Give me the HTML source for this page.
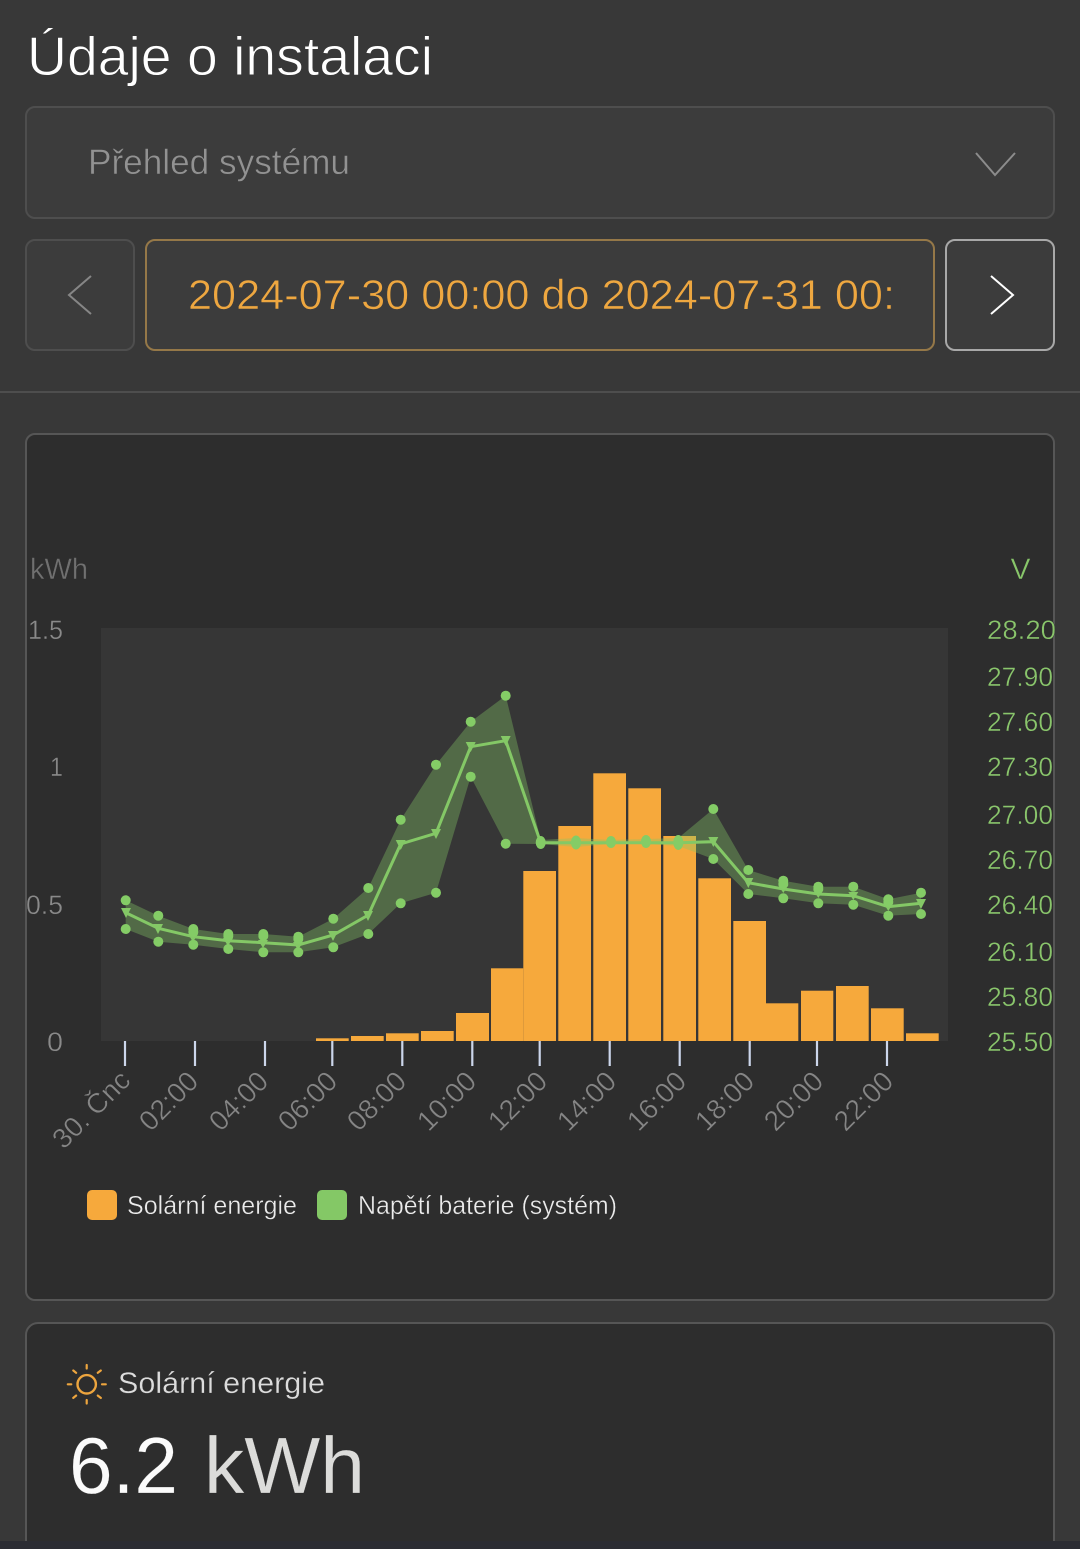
<!DOCTYPE html>
<html lang="cs"><head><meta charset="utf-8"><title>Údaje o instalaci</title>
<style>
html,body{margin:0;padding:0;background:#383838;width:1080px;height:1549px;overflow:hidden}
svg{display:block}
text{font-family:"Liberation Sans",sans-serif}
</style></head><body>
<svg width="1080" height="1549" viewBox="0 0 1080 1549" xmlns="http://www.w3.org/2000/svg">
<rect width="1080" height="1549" fill="#383838"/>
<text x="27" y="75" font-size="55" fill="#fff" textLength="406" lengthAdjust="spacingAndGlyphs" stroke="#383838" stroke-width=".9">Údaje o instalaci</text>
<rect x="26" y="107" width="1028" height="111" rx="9" fill="#3c3c3c" stroke="#4e4e4e" stroke-width="2"/>
<text x="88" y="174" font-size="35" fill="#929292" textLength="262" lengthAdjust="spacingAndGlyphs" stroke="#3c3c3c" stroke-width=".5">Přehled systému</text>
<path d="M976 153 995 175 1015 153" fill="none" stroke="#8c8c8c" stroke-width="2"/>
<rect x="26" y="240" width="108" height="110" rx="9" fill="#3c3c3c" stroke="#4e4e4e" stroke-width="2"/>
<path d="M91 276 69 295 91 314" fill="none" stroke="#868686" stroke-width="2"/>
<rect x="146" y="240" width="788" height="110" rx="9" fill="#3c3c3c" stroke="#957848" stroke-width="2"/>
<text x="188" y="309" font-size="42" fill="#eea740" textLength="707" lengthAdjust="spacingAndGlyphs" stroke="#3c3c3c" stroke-width=".6">2024-07-30 00:00 do 2024-07-31 00:</text>
<rect x="946" y="240" width="108" height="110" rx="9" fill="#3c3c3c" stroke="#a8a8a8" stroke-width="2"/>
<path d="M991 276 1013 295 991 314" fill="none" stroke="#fff" stroke-width="2"/>
<rect x="0" y="391" width="1080" height="2" fill="#4e4e4e"/>

<rect x="26" y="434" width="1028" height="866" rx="9" fill="#2d2d2d" stroke="#565656" stroke-width="2"/>
<rect x="101" y="628" width="847" height="413" fill="#363636"/>

<!-- ticks -->
<g stroke="#ccd6eb" stroke-width="2.200">
<path d="M125 1041V1066M195 1041V1066M265 1041V1066M332.300 1041V1066M402.300 1041V1066M472.300 1041V1066M539.700 1041V1066M609.700 1041V1066M679.700 1041V1066M749.700 1041V1066M817 1041V1066M887 1041V1066"/>
</g>

<!-- bars -->
<g fill="#f6a93c">
<rect x="316" y="1038.300" width="32.700" height="2.700"/>
<rect x="351" y="1036" width="32.700" height="5"/>
<rect x="386" y="1033.300" width="32.700" height="7.700"/>
<rect x="421" y="1031" width="32.700" height="10"/>
<rect x="456" y="1013" width="33" height="28"/>
<rect x="491" y="968.300" width="32.300" height="72.700"/>
<rect x="523.300" y="871" width="32.700" height="170"/>
<rect x="558.300" y="826" width="32.700" height="215"/>
<rect x="593.300" y="773.300" width="32.700" height="267.700"/>
<rect x="628.300" y="788.300" width="32.700" height="252.700"/>
<rect x="663.300" y="836" width="32.700" height="205"/>
<rect x="698.300" y="878.300" width="32.700" height="162.700"/>
<rect x="733.300" y="921" width="32.700" height="120"/>
<rect x="766" y="1003.300" width="32.300" height="37.700"/>
<rect x="801" y="990.700" width="32.300" height="50.300"/>
<rect x="836" y="986" width="32.700" height="55"/>
<rect x="871" y="1008.300" width="32.700" height="32.700"/>
<rect x="906" y="1033.300" width="32.700" height="7.700"/>
</g>

<!-- range -->
<path fill="#84c866" fill-opacity=".36" d="M125.700 900.300 158.300 915.700 193.300 929 228.300 934 263.300 934 298.300 936.700 333.300 918.700 368.300 888 400.700 819.700 436 764.700 470.700 721.700 505.700 695.700 540.700 840 576 838 611 840 646 839 678.300 838 713.300 809 748.300 870 783.300 880.700 818.300 886.700 853.300 886.700 888.300 899.300 921 892.700 921 914 888.300 915.700 853.300 904.700 818.300 903.300 783.300 898.300 748.300 894 713.300 859 678.300 846 646 844 611 844 576 847 540.700 844 505.700 843.700 470.700 776.700 436 892.700 400.700 903.300 368.300 934 333.300 947.300 298.300 952.300 263.300 952.300 228.300 949 193.300 944.700 158.300 941.700 125.700 929Z"/>

<!-- mean line -->
<polyline fill="none" stroke="#84c866" stroke-width="3" points="125.700,912.700 158.300,928.300 193.300,936.700 228.300,940.700 263.300,942.700 298.300,945 333.300,935 368.300,915 400.700,844 436,833.300 470.700,746.700 505.700,740.700 540.700,842.700 576,842.700 611,842.700 646,842.700 678.300,842.700 713.300,841.700 748.300,882.700 783.300,889 818.300,894 853.300,895.700 888.300,906.700 921,903.300"/>

<!-- triangle markers -->
<g fill="#84c866">
<path d="M121 908h10l-5 10zM153 924h10l-5 10zM188 934h10l-5 8zM223 938h10l-5 8zM258 940h10l-5 8zM293 942h10l-5 8zM328 931h10l-5 10zM363 911h10l-5 10zM395.700 840h10l-5 10zM431 829h10l-5 10zM465.700 742h10l-5 10zM500.700 736h10l-5 10zM708.300 837h10l-5 10zM743.300 878h10l-5 10zM778.300 885h10l-5 8zM813.300 890h10l-5 8zM848.300 892h10l-5 8zM883.300 903h10l-5 8zM916 899h10l-5 10z"/>
</g>

<!-- dots -->
<g fill="#84cc66">
<circle cx="125.700" cy="900.300" r="5"/><circle cx="158.300" cy="915.700" r="5"/><circle cx="193.300" cy="929" r="5"/><circle cx="193.300" cy="932" r="5"/><circle cx="228.300" cy="934" r="5"/><circle cx="228.300" cy="936" r="5"/><circle cx="263.300" cy="934" r="5"/><circle cx="263.300" cy="936" r="5"/><circle cx="298.300" cy="936.700" r="5"/><circle cx="298.300" cy="939" r="5"/><circle cx="333.300" cy="918.700" r="5"/><circle cx="368.300" cy="888" r="5"/><circle cx="400.700" cy="819.700" r="5"/><circle cx="436" cy="764.700" r="5"/><circle cx="470.700" cy="721.700" r="5"/><circle cx="505.700" cy="695.700" r="5"/>
<circle cx="125.700" cy="929" r="5"/><circle cx="158.300" cy="941.700" r="5"/><circle cx="193.300" cy="944.700" r="5"/><circle cx="228.300" cy="949" r="5"/><circle cx="263.300" cy="952.300" r="5"/><circle cx="298.300" cy="952.300" r="5"/><circle cx="333.300" cy="947.300" r="5"/><circle cx="368.300" cy="934" r="5"/><circle cx="400.700" cy="903.300" r="5"/><circle cx="436" cy="892.700" r="5"/><circle cx="470.700" cy="776.700" r="5"/><circle cx="505.700" cy="843.700" r="5"/>
<ellipse cx="540.700" cy="842.500" rx="5" ry="6.500"/><ellipse cx="576" cy="842.500" rx="5" ry="7"/><ellipse cx="611" cy="842" rx="5" ry="6"/><ellipse cx="646" cy="841.500" rx="5" ry="6.500"/><ellipse cx="678.300" cy="842.500" rx="5" ry="7.500"/>
<circle cx="713.300" cy="809" r="5"/><circle cx="713.300" cy="859" r="5"/><circle cx="748.300" cy="870" r="5"/><circle cx="748.300" cy="894" r="5"/><circle cx="783.300" cy="880.700" r="5"/><circle cx="783.300" cy="884" r="5"/><circle cx="783.300" cy="898.300" r="5"/><circle cx="818.300" cy="886.700" r="5"/><circle cx="818.300" cy="889" r="5"/><circle cx="818.300" cy="903.300" r="5"/><circle cx="853.300" cy="886.700" r="5"/><circle cx="853.300" cy="904.700" r="5"/><circle cx="888.300" cy="899.300" r="5"/><circle cx="888.300" cy="902" r="5"/><circle cx="888.300" cy="915.700" r="5"/><circle cx="921" cy="892.700" r="5"/><circle cx="921" cy="914" r="5"/>
</g>

<!-- left axis -->
<g stroke="#2d2d2d" stroke-width=".4">
<text x="30" y="579" font-size="30" fill="#707070" textLength="58" lengthAdjust="spacingAndGlyphs">kWh</text>
<g font-size="27" fill="#8a8a8a">
<text x="28" y="639" textLength="35" lengthAdjust="spacingAndGlyphs">1.5</text>
<text x="50" y="776" textLength="13" lengthAdjust="spacingAndGlyphs">1</text>
<text x="26" y="914" textLength="37" lengthAdjust="spacingAndGlyphs">0.5</text>
<text x="47" y="1051" textLength="16" lengthAdjust="spacingAndGlyphs">0</text>
</g>
<!-- right axis -->
<text x="1020.500" y="579" font-size="30" fill="#88c66a" text-anchor="middle">V</text>
<g font-size="27" fill="#8ac66c">
<text x="987" y="639" textLength="69" lengthAdjust="spacingAndGlyphs">28.20</text>
<text x="987" y="686" textLength="66" lengthAdjust="spacingAndGlyphs">27.90</text>
<text x="987" y="731" textLength="66" lengthAdjust="spacingAndGlyphs">27.60</text>
<text x="987" y="776" textLength="66" lengthAdjust="spacingAndGlyphs">27.30</text>
<text x="987" y="824" textLength="66" lengthAdjust="spacingAndGlyphs">27.00</text>
<text x="987" y="869" textLength="66" lengthAdjust="spacingAndGlyphs">26.70</text>
<text x="987" y="914" textLength="66" lengthAdjust="spacingAndGlyphs">26.40</text>
<text x="987" y="961" textLength="66" lengthAdjust="spacingAndGlyphs">26.10</text>
<text x="987" y="1006" textLength="66" lengthAdjust="spacingAndGlyphs">25.80</text>
<text x="987" y="1051" textLength="66" lengthAdjust="spacingAndGlyphs">25.50</text>
</g>
<!-- x labels -->
<g font-size="28" fill="#858585" text-anchor="end">
<text transform="translate(132 1082) rotate(-45)">30. Čnc</text>
<text transform="translate(200 1083) rotate(-45)">02:00</text>
<text transform="translate(270 1083) rotate(-45)">04:00</text>
<text transform="translate(339 1083) rotate(-45)">06:00</text>
<text transform="translate(408 1083) rotate(-45)">08:00</text>
<text transform="translate(478 1083) rotate(-45)">10:00</text>
<text transform="translate(549 1083) rotate(-45)">12:00</text>
<text transform="translate(618 1083) rotate(-45)">14:00</text>
<text transform="translate(688 1083) rotate(-45)">16:00</text>
<text transform="translate(756 1083) rotate(-45)">18:00</text>
<text transform="translate(825 1083) rotate(-45)">20:00</text>
<text transform="translate(895 1083) rotate(-45)">22:00</text>
</g>
<!-- legend text -->
<text x="127" y="1214" font-size="26" fill="#ececec" textLength="170" lengthAdjust="spacingAndGlyphs">Solární energie</text>
<text x="358" y="1214" font-size="26" fill="#ececec" textLength="259" lengthAdjust="spacingAndGlyphs">Napětí baterie (systém)</text>
</g>
<rect x="87" y="1190" width="30" height="30" rx="5" fill="#f6a93c"/>
<rect x="317" y="1190" width="30" height="30" rx="5" fill="#84c866"/>

<!-- card 2 -->
<rect x="26" y="1323" width="1028" height="300" rx="12" fill="#2d2d2d" stroke="#565656" stroke-width="2"/>
<g fill="none" stroke="#eda53e" stroke-linecap="round">
<circle cx="86.700" cy="1384.300" r="9.200" stroke-width="2.400"/>
<path stroke-width="2.200" d="M86.700 1365v3.500M86.700 1400v3.500M67.800 1384.300h3.500M102 1384.300h3.800M73.300 1370.500l2.800 2.300M97.800 1395.600l3 2.300M100.800 1370.500l-3 2.300M76.100 1395.600l-2.800 2.300"/>
</g>
<text x="118" y="1393" font-size="30" fill="#dcdcdc" textLength="207" lengthAdjust="spacingAndGlyphs" stroke="#2d2d2d" stroke-width=".3">Solární energie</text>
<text x="69" y="1493" font-size="80" fill="#fbfbfb" textLength="109" lengthAdjust="spacingAndGlyphs" stroke="#2d2d2d" stroke-width=".2">6.2</text>
<text x="204" y="1493" font-size="80" fill="#dcdcda" textLength="161" lengthAdjust="spacingAndGlyphs" stroke="#2d2d2d" stroke-width=".2">kWh</text>

<rect x="0" y="1541" width="1080" height="8" fill="#2b2c33"/>
</svg>
</body></html>
